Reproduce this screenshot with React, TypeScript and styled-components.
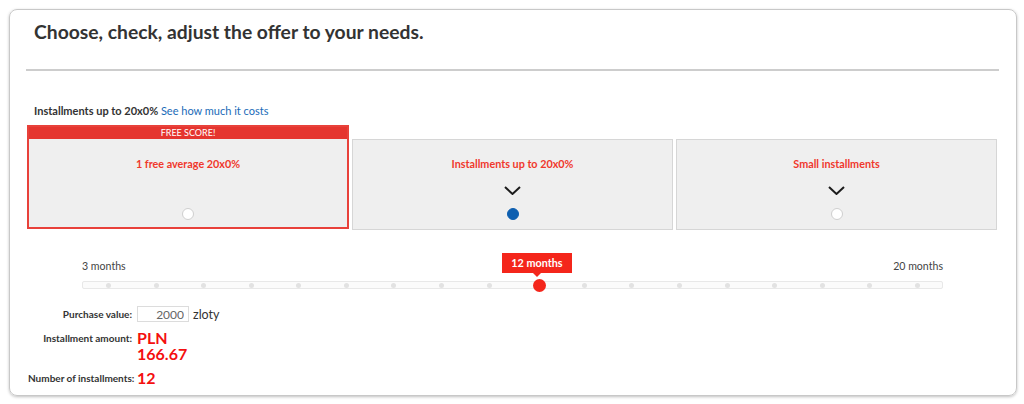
import React from "react";
import styled, { createGlobalStyle } from "styled-components";

const Global = createGlobalStyle`
  html, body { margin: 0; padding: 0; background: #fff; }
  body { font-family: Lato, "Open Sans", Arial, sans-serif; color: #333; }
  * { box-sizing: border-box; }
`;

const Panel = styled.div`
  margin: 9px 7px 8px 9px;
  height: 387px;
  border: 1px solid #c8c8c8;
  border-radius: 8px;
  box-shadow: 0 1px 3px rgba(0, 0, 0, 0.25);
  padding: 0 17px 0 16px;
  display: flex;
  flex-direction: column;
`;

const Title = styled.h1`
  margin: 10px 0 0 8px;
  font-size: 19.3px;
  line-height: 24px;
  font-weight: 700;
  color: #333;
`;

const Rule = styled.hr`
  margin: 25px 0 0 0;
  border: 0;
  height: 2px;
  background: #cdcdcd;
`;

const Sub = styled.div`
  margin: 33px 0 0 8px;
  font-size: 11px;
  line-height: 14px;
  font-weight: 700;
  color: #333;
`;

const Link = styled.a`
  font-weight: 400;
  color: #1a6bb8;
  text-decoration: none;
`;

const Options = styled.div`
  margin: 7px 0 0 1px;
  display: grid;
  grid-template-columns: 322px 321px 321px;
  column-gap: 3px;
  align-items: start;
`;

const Featured = styled.div`
  border: 2px solid #e8413a;
  display: flex;
  flex-direction: column;
`;

const Ribbon = styled.div`
  background: #e5352f;
  color: #fff;
  font-size: 9px;
  line-height: 12px;
  height: 12px;
  text-align: center;
`;

const Option = styled.div<{ $plain?: boolean }>`
  margin-top: ${(p) => (p.$plain ? "14px" : "0")};
  border: ${(p) => (p.$plain ? "1px solid #d6d6d6" : "0")};
  background: #efefef;
  display: flex;
  flex-direction: column;
  align-items: center;
  padding: ${(p) => (p.$plain ? "17px 0 9px" : "18px 0 7px")};
`;

const OptionTitle = styled.div`
  font-size: 10.8px;
  line-height: 14px;
  font-weight: 700;
  color: #f0382c;
`;

const Chevron = styled.svg<{ $hidden?: boolean }>`
  display: block;
  margin-top: 15px;
  visibility: ${(p) => (p.$hidden ? "hidden" : "visible")};
`;

const Radio = styled.span<{ $on?: boolean }>`
  display: block;
  margin-top: 13px;
  width: 12px;
  height: 12px;
  border-radius: 50%;
  background: ${(p) => (p.$on ? "#0e5fb0" : "#fff")};
  border: 1px solid ${(p) => (p.$on ? "#0e5fb0" : "#cfcfcf")};
`;

const Slider = styled.div`
  margin: 0 0 0 56px;
  width: 861px;
  position: relative;
`;

const Ends = styled.div`
  margin-top: 28px;
  display: flex;
  justify-content: space-between;
  font-size: 10.6px;
  line-height: 16px;
  color: #444;
`;

const Track = styled.div`
  margin-top: 7px;
  height: 8px;
  border: 1px solid #e8e8e8;
  background: #fbfbfb;
  border-radius: 2px;
  position: relative;
  display: flex;
  align-items: center;
  justify-content: space-between;
  padding: 0 22px 0 23px;
`;

const Dot = styled.span<{ $hidden?: boolean }>`
  width: 5px;
  height: 5px;
  border-radius: 50%;
  background: #e2e2e2;
  visibility: ${(p) => (p.$hidden ? "hidden" : "visible")};
`;

const Handle = styled.span`
  position: absolute;
  top: 50%;
  width: 13px;
  height: 13px;
  margin: -6.5px 0 0 -6.5px;
  border-radius: 50%;
  background: #f4261b;
`;

const Tip = styled.div`
  position: absolute;
  bottom: 15px;
  transform: translateX(-50%);
  width: 70px;
  height: 20px;
  background: #f4261b;
  color: #fff;
  font-size: 10.8px;
  line-height: 20px;
  font-weight: 700;
  text-align: center;
  &::after {
    content: "";
    position: absolute;
    left: 50%;
    top: 100%;
    margin-left: -4px;
    border: 4px solid transparent;
    border-top-color: #f4261b;
    border-bottom: 0;
  }
`;

const Form = styled.div`
  margin: 17px 0 0 2px;
  display: grid;
  grid-template-columns: 104px auto;
  column-gap: 5px;
  row-gap: 8px;
  align-items: start;
`;

const Label = styled.div<{ $h: number }>`
  text-align: right;
  font-size: 10px;
  font-weight: 700;
  color: #333;
  line-height: ${(p) => p.$h}px;
  white-space: nowrap;
`;

const InputRow = styled.div`
  display: flex;
  align-items: center;
  gap: 4px;
  font-size: 12.5px;
  color: #333;
`;

const Field = styled.input`
  width: 52px;
  height: 16px;
  border: 1px solid #dcdcdc;
  padding: 0 4px;
  font-family: inherit;
  font-size: 12px;
  color: #666;
  text-align: right;
  outline: none;
`;

const Value = styled.div`
  font-size: 16px;
  line-height: 16px;
  font-weight: 700;
  color: #f40f0f;
`;

const Chev = ({ hidden }: { hidden?: boolean }) => (
  <Chevron $hidden={hidden} width="17" height="9" viewBox="0 0 17 9">
    <polyline points="1,1 8.5,8 16,1" fill="none" stroke="#1c1c1c" strokeWidth="2" />
  </Chevron>
);

export default function App() {
  const months = Array.from({ length: 18 }, (_, i) => i + 3);
  const selected = 12;
  const pos = ((selected - 3) / 17) * (861 - 47) + 25;
  return (
    <>
      <Global />
      <Panel>
        <Title>Choose, check, adjust the offer to your needs.</Title>
        <Rule />
        <Sub>
          Installments up to 20x0% <Link href="#">See how much it costs</Link>
        </Sub>
        <Options>
          <Featured>
            <Ribbon>FREE SCORE!</Ribbon>
            <Option>
              <OptionTitle>1 free average 20x0%</OptionTitle>
              <Chev hidden />
              <Radio />
            </Option>
          </Featured>
          <Option $plain>
            <OptionTitle>Installments up to 20x0%</OptionTitle>
            <Chev />
            <Radio $on />
          </Option>
          <Option $plain>
            <OptionTitle>Small installments</OptionTitle>
            <Chev />
            <Radio />
          </Option>
        </Options>
        <Slider>
          <Ends>
            <span>3 months</span>
            <span>20 months</span>
          </Ends>
          <Track>
            {months.map((m) => (
              <Dot key={m} $hidden={m === selected} />
            ))}
            <Handle style={{ left: `${pos + 1}px` }} />
            <Tip style={{ left: `${pos - 2}px` }}>12 months</Tip>
          </Track>
        </Slider>
        <Form>
          <Label $h={16}>Purchase value:</Label>
          <InputRow>
            <Field defaultValue="2000" />
            <span>zloty</span>
          </InputRow>
          <Label $h={16}>Installment amount:</Label>
          <Value>
            PLN
            <br />
            166.67
          </Value>
          <Label $h={16}>Number of installments:</Label>
          <Value>12</Value>
        </Form>
      </Panel>
    </>
  );
}
